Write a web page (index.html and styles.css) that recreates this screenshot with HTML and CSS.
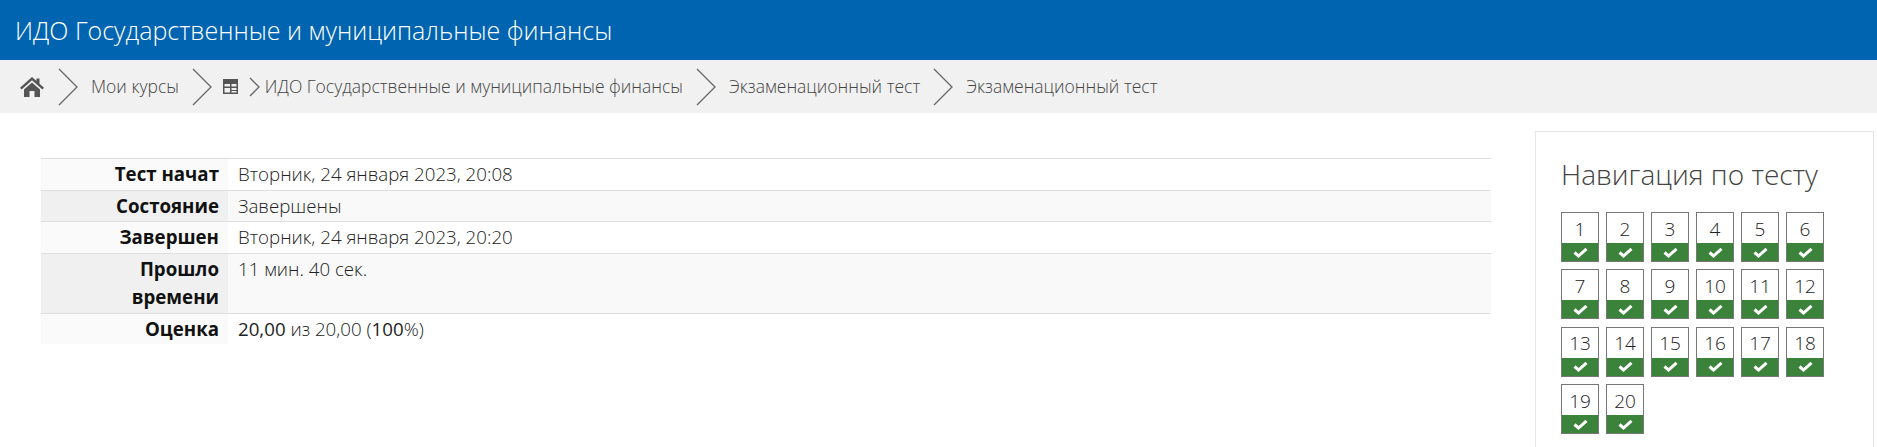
FILE: index.html
```html
<!DOCTYPE html>
<html lang="ru">
<head>
    <meta charset="UTF-8">
    <title>Экзаменационный тест</title>
    <link rel="stylesheet" href="styles.css">
</head>
<body>

<header class="top-bar">
    <h1>ИДО Государственные и муниципальные финансы</h1>
</header>

<nav class="breadcrumb">
    <a class="home" href="#">
        <svg width="24" height="20" viewBox="0 0 24 20"><path fill="#555" d="M12 0 L16.5 4 V1.5 H19.5 V6.7 L24 10.7 L22.4 12.4 L12 3.2 L1.6 12.4 L0 10.7 Z M4 12.6 L12 5.5 L20 12.6 V20 H14.5 V14 H9.5 V20 H4 Z"/></svg>
    </a>
    <svg class="sep" width="20" height="38" viewBox="0 0 20 38"><path d="M1 1 L19 19 L1 37"/></svg>
    <a href="#">Мои курсы</a>
    <svg class="sep" width="20" height="38" viewBox="0 0 20 38"><path d="M1 1 L19 19 L1 37"/></svg>
    <svg class="course-icon" width="15" height="15" viewBox="0 0 15 15"><path fill="#555" d="M0 0 H15 V15 H0 Z M1.5 5 V7.5 H7 V5 Z M8.5 5 V7.5 H13.5 V5 Z M1.5 9 V13.5 H7 V9 Z M8.5 9 V11 H13.5 V9 Z M8.5 12 V13.5 H13.5 V12 Z"/></svg>
    <svg class="sep-small" width="11" height="20" viewBox="0 0 11 20"><path d="M1 1 L10 10 L1 19"/></svg>
    <a class="course-link" href="#">ИДО Государственные и муниципальные финансы</a>
    <svg class="sep" width="20" height="38" viewBox="0 0 20 38"><path d="M1 1 L19 19 L1 37"/></svg>
    <a href="#">Экзаменационный тест</a>
    <svg class="sep" width="20" height="38" viewBox="0 0 20 38"><path d="M1 1 L19 19 L1 37"/></svg>
    <a href="#">Экзаменационный тест</a>
</nav>

<div class="page">
    <main class="content">
        <table class="summary">
            <tr><th>Тест начат</th><td>Вторник, 24 января 2023, 20:08</td></tr>
            <tr><th>Состояние</th><td>Завершены</td></tr>
            <tr><th>Завершен</th><td>Вторник, 24 января 2023, 20:20</td></tr>
            <tr><th>Прошло времени</th><td>11 мин. 40 сек.</td></tr>
            <tr><th>Оценка</th><td><b>20,00</b> из 20,00 (<b>100</b>%)</td></tr>
        </table>
    </main>

    <aside class="quiz-nav">
        <h2>Навигация по тесту</h2>
        <div class="quiz-grid" id="quizGrid"></div>
    </aside>
</div>

<script>
const grid = document.getElementById('quizGrid');
for (let i = 1; i <= 20; i++) {
    const btn = document.createElement('a');
    btn.className = 'quiz-btn';
    btn.href = '#';
    btn.innerHTML = `<span class="num">${i}</span><span class="mark"><svg width="15" height="11" viewBox="0 0 15 11"><path d="M1.5 5.5 L5.5 9 L13.5 1.8"/></svg></span>`;
    grid.appendChild(btn);
}
</script>

</body>
</html>
```

FILE: styles.css
```css
html {
    overflow: hidden;
}
body {
    font-family: "Open Sans", "Noto Sans", sans-serif;
    font-weight: 300;
    color: #222;
    background-color: #fff;
    margin: 0;
}
.top-bar {
    background-color: #0064b0;
    height: 60px;
    display: flex;
    align-items: center;
    padding-left: 15px;
}
.top-bar h1 {
    color: #fff;
    font-size: 25px;
    font-weight: 300;
    margin: 0 0 1px;
}
.breadcrumb {
    background-color: #f1f1f1;
    height: 53px;
    display: flex;
    align-items: center;
    padding-left: 20px;
    font-size: 17.5px;
}
.breadcrumb a {
    color: #444;
    text-decoration: none;
    margin: 0 13px;
    padding-bottom: 2px;
}
.breadcrumb .home {
    display: flex;
    margin: 0 14px 0 0;
    padding-bottom: 0;
}
.breadcrumb .course-link {
    margin-left: 0;
}
.sep path, .sep-small path {
    fill: none;
    stroke: #666;
    stroke-width: 1.3;
}
.course-icon {
    margin-left: 11px;
}
.sep-small {
    margin: 0 5px 0 11px;
}
.page {
    display: flex;
    justify-content: space-between;
    height: 334px;
    overflow: hidden;
    padding: 18px 3px 0 41px;
    box-sizing: border-box;
}
.content {
    width: 1450px;
    padding-top: 27px;
}
.summary {
    width: 100%;
    border-collapse: collapse;
    font-size: 18.7px;
    line-height: 28.5px;
}
.summary tr {
    border-top: 1px solid #dedede;
}
.summary th {
    width: 168px;
    padding: 1px 9px 1px 10px;
    text-align: right;
    vertical-align: top;
    font-weight: 700;
    color: #111;
    background-color: #fafafa;
}
.summary td {
    padding: 1px 10px;
    vertical-align: top;
    background-color: #fff;
}
.summary tr:nth-child(even) th {
    background-color: #f0f0f0;
}
.summary tr:nth-child(even) td {
    background-color: #f9f9f9;
}
.summary b {
    font-weight: 400;
}
.quiz-nav {
    width: 339px;
    height: 400px;
    flex-shrink: 0;
    box-sizing: border-box;
    border: 1px solid #e6e6e6;
    padding: 23px 25px;
}
.quiz-nav h2 {
    font-size: 28px;
    font-weight: 300;
    line-height: 38px;
    color: #444;
    margin: 0 0 19px;
}
.quiz-grid {
    display: grid;
    grid-template-columns: repeat(6, 38px);
    grid-auto-rows: 50px;
    gap: 7.4px 7px;
}
.quiz-btn {
    display: flex;
    flex-direction: column;
    text-decoration: none;
    color: #222;
    border: 1px solid #777;
}
.quiz-btn .num {
    flex: 1;
    display: flex;
    align-items: center;
    justify-content: center;
    font-size: 19px;
    padding-top: 1px;
}
.quiz-btn .mark {
    height: 18px;
    background-color: #3b823b;
    display: flex;
    align-items: center;
    justify-content: center;
}
.mark path {
    fill: none;
    stroke: #fff;
    stroke-width: 3;
}
```
